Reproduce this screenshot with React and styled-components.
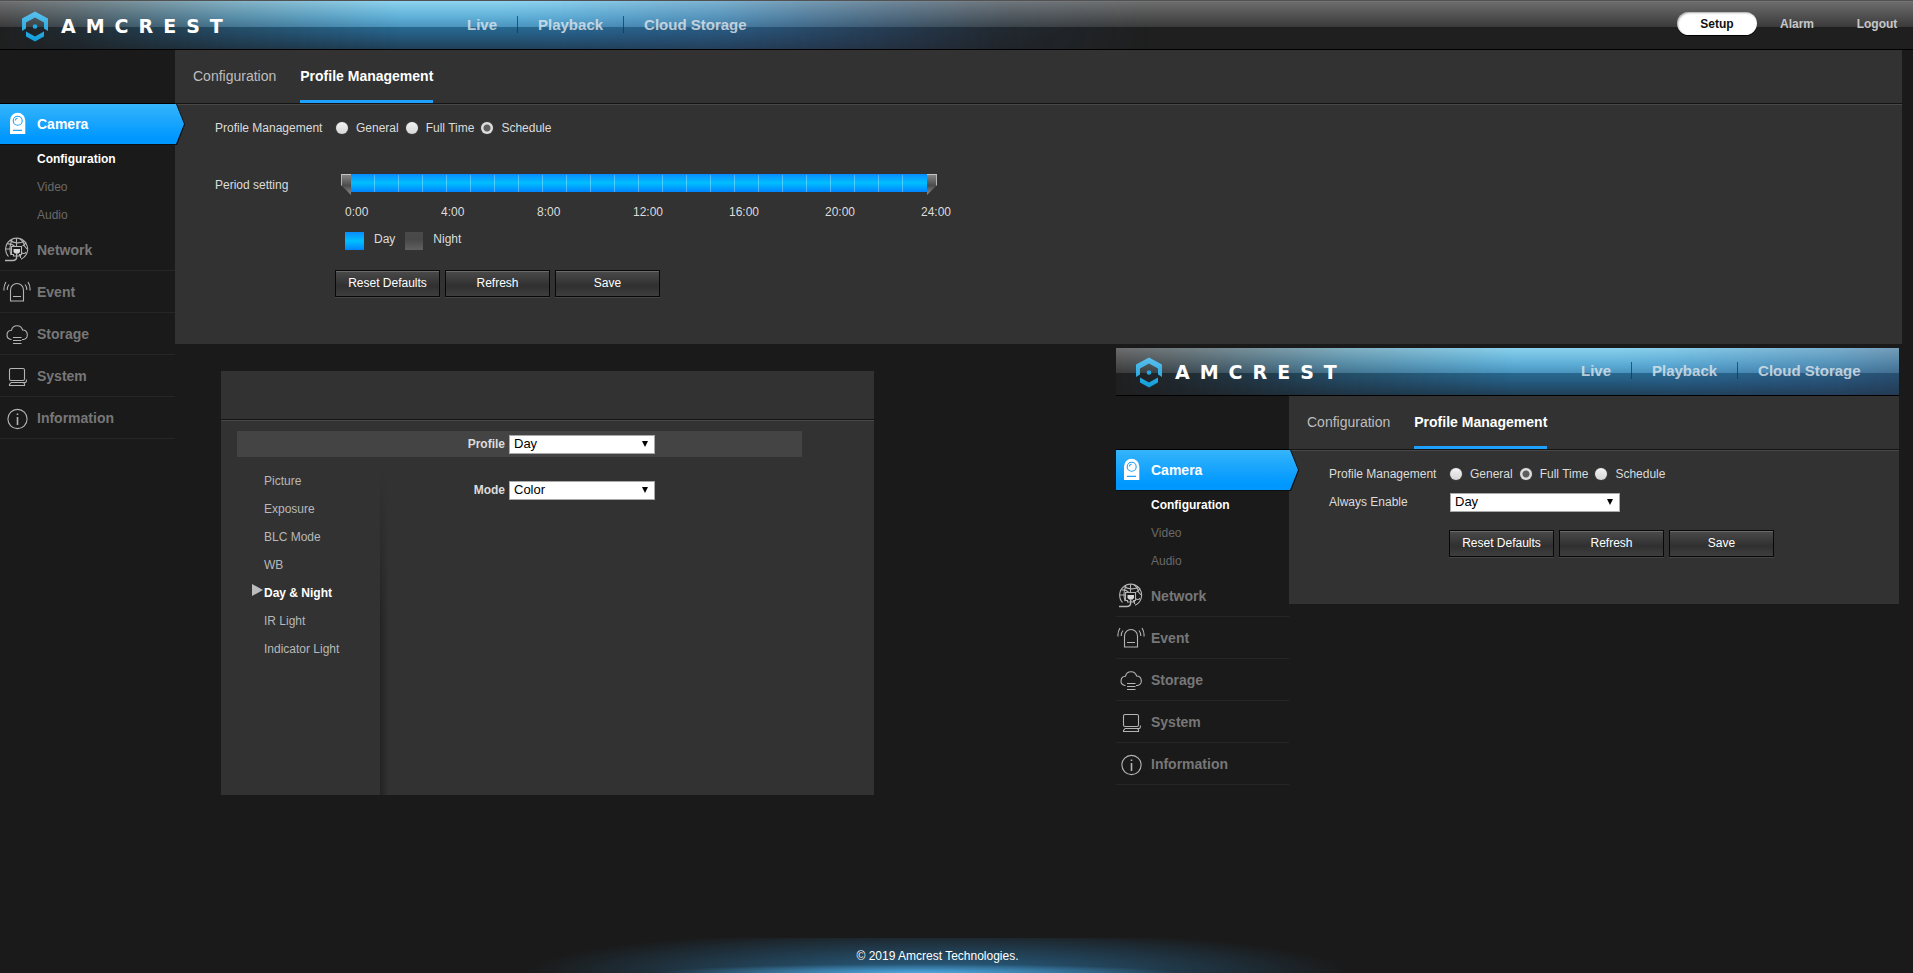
import React, { useState, useId } from "react";
import styled, { createGlobalStyle, css } from "styled-components";

const GlobalStyle = createGlobalStyle`
  * {
    box-sizing: border-box;
  }

  body {
    margin: 0;
    background: #1a1a1a;
    color: #dcdcdc;
    font-family: "Liberation Sans", Arial, sans-serif;
    font-size: 12px;
    line-height: 14px;
  }

  a {
    color: inherit;
    text-decoration: none;
  }

  ul {
    list-style: none;
    margin: 0;
    padding: 0;
  }
`;

const Page = styled.div`
  display: flex;
  flex-direction: column;
  min-height: 100vh;
`;

/* ---------- header ---------- */

const HeaderBar = styled.header`
  position: relative;
  isolation: isolate;
  display: flex;
  height: 50px;
  overflow: hidden;
  border-bottom: 1px solid #000;
  background: linear-gradient(
    #525252 1px,
    #7c7c7c 1px,
    #6c6c6c 2px,
    #3a3a3a 27px,
    #1f1f1f 27px,
    #1f1f1f 49px
  );

  &::before {
    content: "";
    position: absolute;
    z-index: -1;
    top: 1px;
    bottom: 0;
    left: 0;
    width: 1150px;
    background: linear-gradient(
        90deg,
        transparent 500px,
        rgba(60, 90, 160, 0.35) 900px
      ),
      linear-gradient(
        #90d6f3 0px,
        #84ccea 3px,
        #5fb0d8 16px,
        #4a94bf 26px,
        #27698f 26px,
        #265f86 32px,
        #1f4058 48px
      );
    mask-image: linear-gradient(
      90deg,
      transparent 0px,
      rgba(0, 0, 0, 0.2) 80px,
      rgba(0, 0, 0, 0.65) 230px,
      #000 400px,
      #000 560px,
      rgba(0, 0, 0, 0.85) 720px,
      rgba(0, 0, 0, 0.5) 860px,
      rgba(0, 0, 0, 0.15) 1000px,
      transparent 1150px
    );
  }
`;

const Brand = styled.a`
  display: flex;
  flex: none;
  align-items: center;
  gap: 12px;
  width: 447px;
  padding: 3px 0 0 21px;
`;

const BrandName = styled.span`
  font-family: "DejaVu Sans", sans-serif;
  font-size: 19px;
  line-height: 24px;
  font-weight: 700;
  letter-spacing: 10px;
  color: #fff;
`;

const MainNav = styled.nav`
  display: flex;
  flex: none;
  align-items: center;
  height: 49px;
  font-size: 15px;
  line-height: 17px;
  font-weight: 700;
  color: rgba(225, 232, 236, 0.8);

  a {
    padding: 0 20px;
  }

  a + a {
    border-left: 1px solid rgba(20, 50, 75, 0.7);
  }
`;

const UserNav = styled.nav`
  display: flex;
  align-items: center;
  height: 47px;
  margin: 0 -4px 0 auto;
  font-weight: 700;
  color: #c6c6c6;
`;

const UserLink = styled.a`
  width: 80px;
  height: 23px;
  border-radius: 12px;
  line-height: 25px;
  text-align: center;

  ${({ $active }) =>
    $active &&
    css`
      background: #fff;
      color: #111;
      box-shadow: inset 1px 1px 2px rgba(0, 0, 0, 0.35), 0 1px 0 #000;
    `}
`;

/* ---------- sidebar ---------- */

const Body = styled.div`
  display: flex;
  align-items: flex-start;
`;

const Side = styled.nav`
  flex: none;
  width: 175px;
  padding-top: 53px;
`;

const SideLink = styled.a`
  display: flex;
  align-items: center;
  gap: 4px;
  height: 42px;
  padding-left: 3px;
  border-bottom: 1px solid #262626;
  color: #777;
  font-size: 14px;
  line-height: 16px;
  font-weight: 700;

  ${({ $active }) =>
    $active &&
    css`
      position: relative;
      isolation: isolate;
      border-top: 1px solid #000;
      border-bottom-color: #000;
      color: #fff;

      &::before,
      &::after {
        content: "";
        position: absolute;
        z-index: -1;
        inset: 0 -9px 0 0;
        clip-path: polygon(
          0 0,
          calc(100% - 8px) 0,
          100% 50%,
          calc(100% - 8px) 100%,
          0 100%
        );
        background: linear-gradient(#35b4fa, #0098ff 85%);
      }

      &::before {
        inset: 0 -10px -1px 0;
        background: #0a0f14;
      }
    `}
`;

const SubLink = styled.a`
  display: block;
  padding-left: 37px;
  line-height: 28px;
  color: ${({ $active }) => ($active ? "#fff" : "#696969")};
  font-weight: ${({ $active }) => ($active ? 700 : 400)};
`;

const Icon = styled.svg`
  flex: none;
  width: 30px;
  height: 30px;
  fill: none;
  stroke: #b4b4b4;
  stroke-width: 1.1;
`;

/* ---------- panels ---------- */

const Content = styled.div`
  flex: 1;
  min-width: 0;
`;

const Panel = styled.section`
  background: #323232;
`;

const Tabs = styled.div`
  display: flex;
  gap: 24px;
  height: 55px;
  padding-left: 18px;
  border-bottom: 1px solid #484848;
  box-shadow: inset 0 -1px 0 #141414;
`;

const Tab = styled.a`
  height: 53px;
  padding-top: 18px;
  font-size: 14px;
  line-height: 16px;
  color: ${({ $active }) => ($active ? "#fff" : "#bebebe")};
  font-weight: ${({ $active }) => ($active ? 700 : 400)};
  border-bottom: 3px solid ${({ $active }) => ($active ? "#1ea0ff" : "transparent")};
`;

const Form = styled.form`
  padding: 9px 0 47px 40px;
`;

const Row = styled.div`
  display: flex;
  align-items: center;
  min-height: 28px;
`;

const RowLabel = styled.label`
  flex: none;
  width: 121px;
`;

const Radios = styled.div`
  display: flex;
  gap: 7px;

  label {
    display: flex;
    align-items: center;
    gap: 8px;
  }
`;

const Radio = styled.input.attrs({ type: "radio" })`
  appearance: none;
  width: 12px;
  height: 12px;
  margin: 0;
  border-radius: 50%;
  background: linear-gradient(#f2f2f2, #d6d6d6);
  box-shadow: 0 0 1px #999;

  &:checked {
    background: radial-gradient(circle, #5e5e5e 3px, #dedede 4px);
  }
`;

const SelectBox = styled.span`
  position: relative;
  display: block;
  width: ${({ $wide }) => ($wide ? 170 : 146)}px;

  &::after {
    content: "";
    position: absolute;
    top: 6px;
    right: 7px;
    border: 3px solid transparent;
    border-top: 6px solid #000;
    border-bottom: 0;
    pointer-events: none;
  }

  select {
    display: block;
    appearance: none;
    width: 100%;
    height: 19px;
    padding: 0 4px 2px;
    border: 1px solid #a9a9a9;
    border-radius: 0;
    background: #fff;
    color: #000;
    font: 13px/15px "Liberation Sans", Arial, sans-serif;
  }
`;

const Actions = styled.div`
  display: flex;
  gap: 5px;
  margin: ${({ $top }) => $top}px 0 0 120px;
`;

const Button = styled.button`
  width: 105px;
  height: 27px;
  padding: 0 0 2px;
  border: 1px solid #080808;
  background: linear-gradient(#4a4a4a, #303030 60%, #3e3e3e);
  box-shadow: inset 0 1px 0 #6a6a6a, 0 1px 0 #464646;
  color: #fff;
  font: 12px/14px "Liberation Sans", Arial, sans-serif;
`;

/* ---------- period slider ---------- */

const PeriodRow = styled.div`
  display: flex;
  align-items: center;
  margin-top: 32px;
`;

const Slider = styled.div`
  position: relative;
  width: 596px;
  height: 21px;
  margin-left: 5px;
  padding: 0 10px;
`;

const dayFill = "linear-gradient(#0a8cff, #00bfff 50%, #0084ff)";
const nightFill = "linear-gradient(#4a4a4a, #484848 40%, #606060)";

const Track = styled.div`
  position: relative;
  height: 18px;
  background: ${nightFill};

  &::after {
    content: "";
    position: absolute;
    inset: 1px 1px 0 0;
    background: repeating-linear-gradient(
      90deg,
      transparent 0px,
      transparent 23px,
      rgba(255, 255, 255, 0.3) 23px,
      rgba(255, 255, 255, 0.3) 24px
    );
  }
`;

const Fill = styled.div`
  height: 18px;
  background: ${dayFill};
`;

const thumb = css`
  appearance: none;
  pointer-events: auto;
  width: 10px;
  height: 21px;
  border: 0;
  border-radius: 0;
  background: linear-gradient(#8a8a8a, #4c4c4c 55%, #8c8c8c);
  box-shadow: inset 0 1px 0 #c4c4c4,
    inset ${({ $end }) => ($end ? "-1px" : "1px")} 0 0 #b4b4b4;
  clip-path: ${({ $end }) =>
    $end
      ? "polygon(0 0, 100% 0, 100% 52%, 0 100%)"
      : "polygon(0 0, 100% 0, 100% 100%, 0 52%)"};
`;

const Handle = styled.input.attrs({ type: "range", min: 0, max: 24 })`
  position: absolute;
  inset: 0;
  appearance: none;
  width: 100%;
  height: 21px;
  margin: 0;
  background: none;
  pointer-events: none;

  &::-webkit-slider-thumb {
    ${thumb}
  }
`;

const Hours = styled.div`
  display: flex;
  margin: 9px 0 0 130px;
  line-height: 16px;

  span {
    width: 96px;
  }
`;

const Legend = styled.div`
  display: flex;
  gap: 10px;
  margin: 12px 0 0 130px;
`;

const Swatch = styled.span`
  width: ${({ $night }) => ($night ? 18 : 19)}px;
  height: 18px;
  background: ${({ $night }) => ($night ? nightFill : dayFill)};
`;

/* ---------- lower area ---------- */

const Lower = styled.div`
  display: flex;
  justify-content: space-between;
  align-items: flex-start;
  padding: 4px 3px 0 46px;
`;

const ProfilePanel = styled(Panel)`
  display: flex;
  flex-direction: column;
  flex: 0 1 653px;
  min-height: 424px;
  margin-top: 23px;
`;

const ProfileHead = styled.div`
  height: 50px;
  border-bottom: 1px solid #484848;
  box-shadow: inset 0 -1px 0 #141414;
`;

const ProfileBar = styled.div`
  margin: 10px 72px 10px 16px;
  padding-left: 151px;
  background: #444;
`;

const Field = styled.label`
  display: flex;
  align-items: center;
  gap: 4px;
  height: 26px;
  font-weight: 700;

  > span:first-child {
    width: 117px;
    text-align: right;
  }
`;

const ProfileBody = styled.div`
  display: flex;
  flex: 1;
`;

const Menu = styled.ul`
  flex: none;
  width: 159px;
`;

const MenuLink = styled.a`
  display: flex;
  align-items: center;
  height: 28px;
  padding-left: ${({ $active }) => ($active ? 31 : 43)}px;
  color: ${({ $active }) => ($active ? "#fff" : "#b8b8b8")};
  font-weight: ${({ $active }) => ($active ? 700 : 400)};

  ${({ $active }) =>
    $active &&
    css`
      &::before {
        content: "";
        margin: 0 1px 6px 0;
        border: 6px solid transparent;
        border-left: 11px solid #bdbdbd;
        border-right: 0;
      }
    `}
`;

const ProfileFields = styled.div`
  flex: 1;
  padding: 10px 0 0 8px;
  background: linear-gradient(#323232, rgba(50, 50, 50, 0) 160px),
    linear-gradient(90deg, #232323, #323232 9px);
`;

const Inset = styled.div`
  flex: 0 1 783px;
  overflow: hidden;
`;

const InsetContent = styled.div`
  margin: -2px 0 0 -2px;
`;

const Footer = styled.footer`
  margin-top: auto;
  padding: 11px 38px 10px 0;
  text-align: center;
  color: #fff;
  background: radial-gradient(
      ellipse 260px 9px at 48% 100%,
      rgba(82, 176, 232, 0.9),
      transparent
    ),
    radial-gradient(ellipse 410px 44px at 49% 100%, #29638a, transparent);
`;

/* ---------- drawings ---------- */

const LogoMark = () => {
  const id = useId();
  return (
    <svg width="28" height="32" viewBox="21 10 28 32" aria-hidden="true">
      <defs>
        <linearGradient id={id} x1="0" y1="0" x2="0" y2="1">
          <stop offset="0" stopColor="#5cc0ec" />
          <stop offset="1" stopColor="#0f9edb" />
        </linearGradient>
      </defs>
      <path
        d="M22 18.500 35 11.500 48 18.500V31L44 28.500V22.500L35 17.500 26 22.500V28.500L22 31ZM26 31.500 35 36.500 44 31.500V36.500L35 41.500 26 36.500Z"
        fill={`url(#${id})`}
      />
      <circle cx="35" cy="26.500" r="2.300" fill="#1fa9e4" />
    </svg>
  );
};

const CameraIcon = () => (
  <Icon viewBox="0 0 30 30" aria-hidden="true">
    <path d="M7 25V11.500a7.600 7.600 0 0 1 15.300 0V25Z" fill="#fff" stroke="none" />
    <circle cx="14.700" cy="11.700" r="4.500" stroke="#1fa3f7" />
    <path d="M12.300 11.500a2.500 2.500 0 0 1 2.200-2.300M10 21.400h9" stroke="#1fa3f7" />
  </Icon>
);

const NetworkIcon = () => (
  <Icon viewBox="0 0 30 30" aria-hidden="true">
    <path d="M5.500 21.500A11 11 0 1 1 18 24.200" />
    <path d="M2.500 14H8M13.500 3.500v8M7 5.500c4 3 10 3 14 1M4.500 9c3-.5 5 .5 7 2M9 5c-2 4-2.500 10-1 15M17 4c3 2 4 4 4.500 7l2.500 3M19.500 11c2-1 3-2 3.500-4M19 18c2 1 3 1 4-1M17.500 20v3" />
    <path d="M8.500 11.500h10v8h-2v1.500h-6v-1.500h-2Z" fill="#1a1a1a" />
    <path d="M10.500 14h6.500v3l-1.500 1.500h-3.500L10.500 17Z" fill="#d8d8d8" stroke="none" />
    <path d="M13.700 18v3.500c0 2.500-1 4-4 4H2" strokeWidth="1.400" />
  </Icon>
);

const EventIcon = () => (
  <Icon viewBox="0 0 30 30" aria-hidden="true">
    <path d="M7.500 24V13a6.500 6.500 0 0 1 13 0v11ZM10 19.500h8" />
    <path d="M3 5Q.5 9 1 13.500M6 7.500Q4 10 4.300 13M25 5q2.500 4 2 8.500M22 7.500q2 2.500 1.700 5.500" />
  </Icon>
);

const StorageIcon = () => (
  <Icon viewBox="0 0 30 30" aria-hidden="true">
    <path d="M8.500 20.500H7.800a4.700 4.700 0 0 1 .7-9.300A5.700 5.700 0 0 1 19.600 11a4.800 4.800 0 0 1 .9 9.500H19M10 18.500h8.500M10 21.500h8.500M10 24.500h8.500" />
  </Icon>
);

const SystemIcon = () => (
  <Icon viewBox="0 0 30 30" aria-hidden="true">
    <rect x="6.500" y="7.500" width="15" height="12" rx="1.500" />
    <path d="M8 21.500h14.500q1-.5 1-3M8 21.500l-1.500 2v1h15v-1.500l-1-1.500" />
  </Icon>
);

const InfoIcon = () => (
  <Icon viewBox="0 0 30 30" aria-hidden="true">
    <circle cx="14.500" cy="16" r="9.600" />
    <path d="M14.500 14v8M14.500 10.500v1.500" strokeWidth="1.600" />
  </Icon>
);

/* ---------- components ---------- */

const Header = ({ children }) => (
  <HeaderBar>
    <Brand href="#home">
      <LogoMark />
      <BrandName>AMCREST</BrandName>
    </Brand>
    <MainNav>
      <a href="#live">Live</a>
      <a href="#playback">Playback</a>
      <a href="#cloud">Cloud Storage</a>
    </MainNav>
    {children}
  </HeaderBar>
);

const sections = [
  { name: "Network", icon: NetworkIcon },
  { name: "Event", icon: EventIcon },
  { name: "Storage", icon: StorageIcon },
  { name: "System", icon: SystemIcon },
  { name: "Information", icon: InfoIcon },
];

const Sidebar = () => (
  <Side>
    <SideLink href="#camera" $active>
      <CameraIcon />
      Camera
    </SideLink>
    <SubLink href="#configuration" $active>
      Configuration
    </SubLink>
    <SubLink href="#video">Video</SubLink>
    <SubLink href="#audio">Audio</SubLink>
    {sections.map(({ name, icon: SectionIcon }) => (
      <SideLink key={name} href={`#${name.toLowerCase()}`}>
        <SectionIcon />
        {name}
      </SideLink>
    ))}
  </Side>
);

const Select = ({ id, options, wide }) => (
  <SelectBox $wide={wide}>
    <select id={id}>
      {options.map((option) => (
        <option key={option}>{option}</option>
      ))}
    </select>
  </SelectBox>
);

const ManagementPanel = ({ initial, actionsTop, children }) => {
  const [mode, setMode] = useState(initial);
  const group = useId();

  return (
    <Panel>
      <Tabs>
        <Tab href="#configuration">Configuration</Tab>
        <Tab href="#profile" $active>
          Profile Management
        </Tab>
      </Tabs>
      <Form onSubmit={(e) => e.preventDefault()}>
        <Row role="radiogroup" aria-labelledby={group}>
          <RowLabel as="span" id={group}>
            Profile Management
          </RowLabel>
          <Radios>
            {["General", "Full Time", "Schedule"].map((name) => (
              <label key={name}>
                <Radio
                  name={group}
                  checked={mode === name}
                  onChange={() => setMode(name)}
                />
                {name}
              </label>
            ))}
          </Radios>
        </Row>
        {children}
        <Actions $top={actionsTop}>
          <Button type="reset">Reset Defaults</Button>
          <Button type="button">Refresh</Button>
          <Button type="submit">Save</Button>
        </Actions>
      </Form>
    </Panel>
  );
};

const PeriodSetting = () => {
  const [start, setStart] = useState(0);
  const [end, setEnd] = useState(24);

  return (
    <>
      <PeriodRow>
        <RowLabel htmlFor="period-start">Period setting</RowLabel>
        <Slider>
          <Track>
            <Fill
              style={{
                marginLeft: `${(start / 24) * 100}%`,
                width: `${((end - start) / 24) * 100}%`,
              }}
            />
          </Track>
          <Handle
            id="period-start"
            value={start}
            onChange={(e) => setStart(Math.min(+e.target.value, end))}
          />
          <Handle
            $end
            aria-label="Period end"
            value={end}
            onChange={(e) => setEnd(Math.max(+e.target.value, start))}
          />
        </Slider>
      </PeriodRow>
      <Hours>
        {[0, 4, 8, 12, 16, 20, 24].map((hour) => (
          <span key={hour}>{hour}:00</span>
        ))}
      </Hours>
      <Legend>
        <Swatch />
        Day
        <Swatch $night />
        Night
      </Legend>
    </>
  );
};

const menu = [
  "Picture",
  "Exposure",
  "BLC Mode",
  "WB",
  "Day & Night",
  "IR Light",
  "Indicator Light",
];

const ProfileSettings = () => (
  <ProfilePanel>
    <ProfileHead />
    <ProfileBar>
      <Field>
        <span>Profile</span>
        <Select options={["Day", "Night"]} />
      </Field>
    </ProfileBar>
    <ProfileBody>
      <Menu>
        {menu.map((name) => (
          <li key={name}>
            <MenuLink href="#conditions" $active={name === "Day & Night"}>
              {name}
            </MenuLink>
          </li>
        ))}
      </Menu>
      <ProfileFields>
        <Field>
          <span>Mode</span>
          <Select options={["Color", "Auto", "B/W"]} />
        </Field>
      </ProfileFields>
    </ProfileBody>
  </ProfilePanel>
);

const MainContent = styled(Content)`
  margin-right: 11px;
`;

const App = () => (
  <Page>
    <GlobalStyle />
    <Header>
      <UserNav>
        <UserLink href="#setup" $active>
          Setup
        </UserLink>
        <UserLink href="#alarm">Alarm</UserLink>
        <UserLink href="#logout">Logout</UserLink>
      </UserNav>
    </Header>
    <Body>
      <Sidebar />
      <MainContent>
        <ManagementPanel initial="Schedule" actionsTop={20}>
          <PeriodSetting />
        </ManagementPanel>
        <Lower>
          <ProfileSettings />
          <Inset>
            <InsetContent>
              <Header />
              <Body>
                <Sidebar />
                <Content>
                  <ManagementPanel initial="Full Time" actionsTop={14}>
                    <Row>
                      <RowLabel htmlFor="always">Always Enable</RowLabel>
                      <Select id="always" options={["Day", "Night"]} wide />
                    </Row>
                  </ManagementPanel>
                </Content>
              </Body>
            </InsetContent>
          </Inset>
        </Lower>
      </MainContent>
    </Body>
    <Footer>© 2019 Amcrest Technologies.</Footer>
  </Page>
);

export default App;
